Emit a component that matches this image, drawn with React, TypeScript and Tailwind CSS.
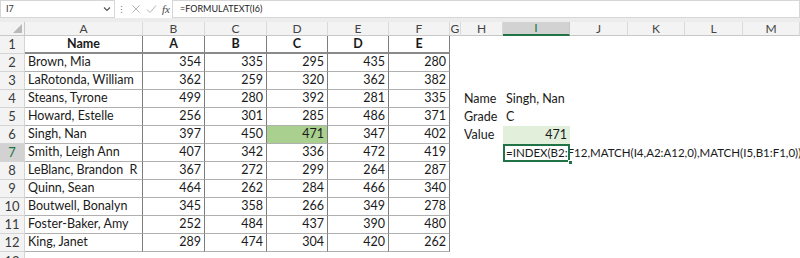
import React from "react";

const font = { fontFamily: "Lato, 'Open Sans', sans-serif" };

const data: [string, number[]][] = [
  ["Brown, Mia", [354, 335, 295, 435, 280]],
  ["LaRotonda, William", [362, 259, 320, 362, 382]],
  ["Steans, Tyrone", [499, 280, 392, 281, 335]],
  ["Howard, Estelle", [256, 301, 285, 486, 371]],
  ["Singh, Nan", [397, 450, 471, 347, 402]],
  ["Smith, Leigh Ann", [407, 342, 336, 472, 419]],
  ["LeBlanc, Brandon  R", [367, 272, 299, 264, 287]],
  ["Quinn, Sean", [464, 262, 284, 466, 340]],
  ["Boutwell, Bonalyn", [345, 358, 266, 349, 278]],
  ["Foster-Baker, Amy", [252, 484, 437, 390, 480]],
  ["King, Janet", [289, 474, 304, 420, 262]],
];

const cols = ["A", "B", "C", "D", "E", "F", "G", "H", "I", "J", "K", "L", "M"];

function RowHead({ n, active }: { n: number | string; active?: boolean }) {
  return (
    <div
      className={`flex items-center justify-center border-r border-b border-[#d4d4d4] text-[13px] ${
        active ? "bg-[#d2d2d2] text-[#217346]" : "bg-[#f3f3f3] text-[#3a3a3a]"
      }`}
    >
      {n}
    </div>
  );
}

function TCell({
  children,
  right,
  bold,
  center,
  fill,
  thick,
}: {
  children?: React.ReactNode;
  right?: boolean;
  bold?: boolean;
  center?: boolean;
  fill?: string;
  thick?: boolean;
}) {
  return (
    <div
      className={`flex items-center whitespace-pre border-r border-r-[#7d7d7d] ${
        thick ? "border-b-2 border-b-[#8a8a8a]" : "border-b border-b-[#b0b0b0]"
      } px-[3px] text-[12.5px] text-[#1a1a1a] ${right ? "justify-end" : ""} ${
        center ? "justify-center" : ""
      } ${bold ? "font-bold" : ""} ${fill ?? "bg-white"}`}
    >
      {children}
    </div>
  );
}

function Blank({ children, right, fill }: { children?: React.ReactNode; right?: boolean; fill?: string }) {
  return (
    <div
      className={`flex items-center whitespace-nowrap px-[3px] text-[12.5px] text-[#1a1a1a] ${
        right ? "justify-end" : ""
      } ${fill ?? "bg-white"}`}
    >
      {children}
    </div>
  );
}

function rightSide(r: number) {
  // columns G..M for one sheet row
  const cells: React.ReactNode[] = [];
  const key = (c: string) => `${c}${r}`;
  cells.push(<Blank key={key("G")} />);
  if (r === 4 || r === 5 || r === 6) {
    const label = r === 4 ? "Name" : r === 5 ? "Grade" : "Value";
    cells.push(<Blank key={key("H")}>{label}</Blank>);
    if (r === 4) cells.push(<Blank key={key("I")}>Singh, Nan</Blank>);
    if (r === 5) cells.push(<Blank key={key("I")}>C</Blank>);
    if (r === 6)
      cells.push(
        <Blank key={key("I")} right fill="bg-[#e2efda]">
          471
        </Blank>
      );
  } else if (r === 7) {
    cells.push(<Blank key={key("H")} />);
    cells.push(
      <div
        key={key("I")}
        className="relative z-10 flex items-center whitespace-nowrap bg-white pl-[3px] text-[11.5px] text-[#1a1a1a]"
      >
        =INDEX(B2:F12,MATCH(I4,A2:A12,0),MATCH(I5,B1:F1,0))
        <div className="absolute inset-0 border-2 border-[#217346]" />
        <div className="absolute -bottom-[3px] -right-[3px] h-[5px] w-[5px] border border-white bg-[#217346]" />
      </div>
    );
  } else {
    cells.push(<Blank key={key("H")} />);
    cells.push(<Blank key={key("I")} />);
  }
  ["J", "K", "L", "M"].forEach((c) =>
    cells.push(r === 7 ? <div key={key(c)} /> : <Blank key={key(c)} />)
  );
  return cells;
}

export default function App() {
  return (
    <div className="h-[258px] w-[800px] overflow-hidden bg-white" style={font}>
      {/* formula bar */}
      <div className="flex h-[18px] items-stretch bg-white">
        <div className="flex w-[115px] items-center justify-between border border-[#d6d6d6] pl-[5px] pr-[3px] text-[9px] text-[#333]">
          <span>I7</span>
          <svg width="8" height="6" viewBox="0 0 8 6">
            <path d="M1 1.5 L4 4.5 L7 1.5" fill="none" stroke="#555" strokeWidth="1.2" />
          </svg>
        </div>
        <div className="flex w-[57px] items-center gap-[5px] pl-[2px]">
          <span className="text-[9px] leading-none text-[#777]">⋮</span>
          <svg width="10" height="10" viewBox="0 0 10 10">
            <path d="M1.5 1.5 L8.5 8.5 M8.5 1.5 L1.5 8.5" stroke="#b5b5b5" strokeWidth="1" />
          </svg>
          <svg width="11" height="10" viewBox="0 0 11 10">
            <path d="M1 5.5 L4 8.5 L10 1.5" fill="none" stroke="#b5b5b5" strokeWidth="1" />
          </svg>
          <span className="text-[11px] italic text-[#444]" style={{ fontFamily: "'Liberation Serif', serif" }}>
            fx
          </span>
        </div>
        <div className="flex flex-1 items-center border border-[#d6d6d6] pl-[7px] text-[9px] text-[#222]">
          =FORMULATEXT(I6)
        </div>
      </div>
      <div className="h-[4px] bg-[#ececec]" />

      {/* sheet */}
      <div className="grid grid-cols-[25px_118px_62px_62px_61px_61px_61px_11px_42px_67px_58px_57px_58px_57px] grid-rows-[14px_repeat(12,18px)_8px]">
        {/* header row */}
        <div className="relative border-r border-b border-[#c8c8c8] bg-[#f3f3f3]">
          <svg className="absolute bottom-[2px] right-[2px]" width="9" height="9" viewBox="0 0 9 9">
            <path d="M9 0 L9 9 L0 9 Z" fill="#b9b9b9" />
          </svg>
        </div>
        {cols.map((c) => (
          <div
            key={c}
            className={`flex items-center justify-center border-r text-[12px] ${
              c === "I"
                ? "border-b-2 border-b-[#217346] border-r-[#c8c8c8] bg-[#d2d2d2] text-[#217346]"
                : "border-b border-b-[#c8c8c8] border-r-[#dadada] bg-[#f3f3f3] text-[#444]"
            }`}
          >
            {c}
          </div>
        ))}

        {/* row 1 */}
        <RowHead n={1} />
        <TCell bold center thick>
          Name
        </TCell>
        {["A", "B", "C", "D", "E"].map((h) => (
          <TCell key={h} bold center thick>
            {h}
          </TCell>
        ))}
        {rightSide(1)}

        {data.map(([name, vals], i) => {
          const r = i + 2;
          return (
            <React.Fragment key={r}>
              <RowHead n={r} active={r === 7} />
              <TCell>{name}</TCell>
              {vals.map((v, j) => (
                <TCell key={j} right fill={r === 6 && j === 2 ? "bg-[#a9d08e]" : undefined}>
                  {v}
                </TCell>
              ))}
              {rightSide(r)}
            </React.Fragment>
          );
        })}

        {/* row 13, only its top shows */}
        <div className="flex items-start justify-center overflow-hidden border-r border-[#d4d4d4] bg-[#f3f3f3] pt-[3px] text-[13px] leading-none text-[#3a3a3a]">
          13
        </div>
        {cols.map((c) => (
          <Blank key={`13${c}`} />
        ))}
      </div>
    </div>
  );
}
